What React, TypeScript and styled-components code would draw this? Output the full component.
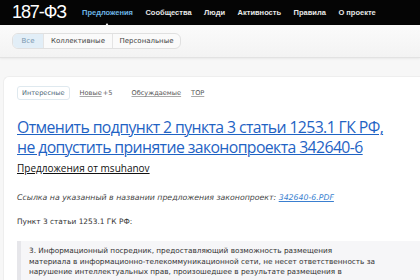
import React from "react";
import styled, { createGlobalStyle } from "styled-components";

const Global = createGlobalStyle`
  html, body { margin: 0; padding: 0; background: #f7f7f7; }
  body { width: 420px; height: 280px; overflow: hidden; font-family: "DejaVu Sans", Verdana, sans-serif; }
`;

const Header = styled.header`
  height: 25px;
  background: #050505;
  display: flex;
  align-items: center;
  padding-left: 12px;
  white-space: nowrap;
`;

const Logo = styled.div`
  font-family: "Liberation Sans", Arial, sans-serif;
  color: #fff;
  font-size: 18px;
  letter-spacing: -1.1px;
  margin-right: 16px;
  margin-top: -1px;
`;

const Nav = styled.nav`
  display: flex;
  gap: 12.5px;
`;

const NavItem = styled.a<{ $active?: boolean }>`
  font-family: "Liberation Sans", Arial, sans-serif;
  font-size: 7.5px;
  font-weight: bold;
  color: ${(p) => (p.$active ? "#6cb4e4" : "#e8e8e8")};
  text-decoration: none;
  position: relative;
  ${(p) =>
    p.$active &&
    `&::after {
      content: "";
      position: absolute;
      left: 50%;
      bottom: -9px;
      margin-left: -2px;
      border-left: 2px solid transparent;
      border-right: 2px solid transparent;
      border-bottom: 3px solid #f7f7f7;
    }`}
`;

const SubBar = styled.div`
  height: 32px;
  background: linear-gradient(#fbfbfb, #f3f3f3);
  border-bottom: 1px solid #e2e2e2;
  box-shadow: 0 1px 2px rgba(0, 0, 0, 0.06);
  display: flex;
  align-items: center;
  padding-left: 12px;
`;

const Segments = styled.div`
  display: flex;
  border: 1px solid #e0e0e0;
  border-radius: 6px;
  background: #fafafa;
  overflow: hidden;
  height: 14px;
`;

const Segment = styled.div<{ $active?: boolean; $w: number }>`
  width: ${(p) => p.$w}px;
  display: flex;
  align-items: center;
  justify-content: center;
  font-size: 7px;
  font-family: "DejaVu Sans", Verdana, sans-serif;
  color: ${(p) => (p.$active ? "#7a98b0" : "#444")};
  background: ${(p) => (p.$active ? "#e2eef7" : "transparent")};
  border-left: ${(p) => (p.$active ? "none" : "1px solid #e4e4e4")};
`;

const Page = styled.div`
  padding: 18px 0 0 3px;
`;

const Card = styled.div`
  background: #fff;
  border-top: 1px solid #eeeeee;
  border-left: 1px solid #eeeeee;
  border-top-left-radius: 6px;
  padding: 9px 0 0 13px;
  height: 220px;
`;

const Filters = styled.div`
  display: flex;
  align-items: center;
  gap: 10px;
  font-size: 6.6px;
  height: 14px;
`;

const FilterBox = styled.span`
  border: 1px solid #dfe9ef;
  border-radius: 3px;
  padding: 2px 4px;
  color: #4d6878;
`;

const FilterLink = styled.a`
  color: #555;
  text-decoration: underline;
  text-decoration-color: #aaa;
`;

const Count = styled.span`
  color: #666;
  margin-left: -9px;
  margin-right: 9px;
`;

const Title = styled.a`
  display: block;
  margin-top: 17px;
  font-family: "Open Sans", "Noto Sans", sans-serif;
  font-size: 15.8px;
  line-height: 20px;
  color: #1f63c4;
  text-decoration: underline;
  text-decoration-thickness: 1px;
  letter-spacing: -0.6px;
  white-space: nowrap;
`;

const Author = styled.a`
  display: inline-block;
  margin-top: -2px;
  font-family: "Open Sans", "Noto Sans", sans-serif;
  font-size: 10px;
  color: #111;
  text-decoration: underline;
`;

const Note = styled.p`
  margin: 17px 0 0;
  font-style: italic;
  font-size: 7.8px;
  color: #444;
`;

const NoteLink = styled.a`
  color: #3a7fd0;
  text-decoration: underline;
`;

const Para = styled.p`
  margin: 15px 0 0;
  font-size: 7.4px;
  color: #333;
`;

const Quote = styled.blockquote`
  margin: 15px 0 0;
  background: #f6f6f8;
  border-left: 4px solid #e6e6ea;
  padding: 5px 0 6px 8px;
  font-size: 7.3px;
  line-height: 10.5px;
  color: #333;
  white-space: nowrap;
`;

export default function App() {
  return (
    <>
      <Global />
      <Header>
        <Logo>187-ФЗ</Logo>
        <Nav>
          <NavItem $active>Предложения</NavItem>
          <NavItem>Сообщества</NavItem>
          <NavItem>Люди</NavItem>
          <NavItem>Активность</NavItem>
          <NavItem>Правила</NavItem>
          <NavItem>О проекте</NavItem>
        </Nav>
      </Header>
      <SubBar>
        <Segments>
          <Segment $active $w={30}>Все</Segment>
          <Segment $w={68}>Коллективные</Segment>
          <Segment $w={67}>Персональные</Segment>
        </Segments>
      </SubBar>
      <Page>
        <Card>
          <Filters>
            <FilterBox>Интересные</FilterBox>
            <FilterLink>Новые</FilterLink>
            <Count>+5</Count>
            <FilterLink>Обсуждаемые</FilterLink>
            <FilterLink>TOP</FilterLink>
          </Filters>
          <Title>
            Отменить подпункт 2 пункта 3 статьи 1253.1 ГК РФ,
            <br />
            не допустить принятие законопроекта 342640-6
          </Title>
          <Author>Предложения от msuhanov</Author>
          <Note>
            Ссылка на указанный в названии предложения законопроект:{" "}
            <NoteLink>342640-6.PDF</NoteLink>
          </Note>
          <Para>Пункт 3 статьи 1253.1 ГК РФ:</Para>
          <Quote>
            3. Информационный посредник, предоставляющий возможность размещения
            <br />
            материала в информационно-телекоммуникационной сети, не несет ответственность за
            <br />
            нарушение интеллектуальных прав, произошедшее в результате размещения в
          </Quote>
        </Card>
      </Page>
    </>
  );
}
